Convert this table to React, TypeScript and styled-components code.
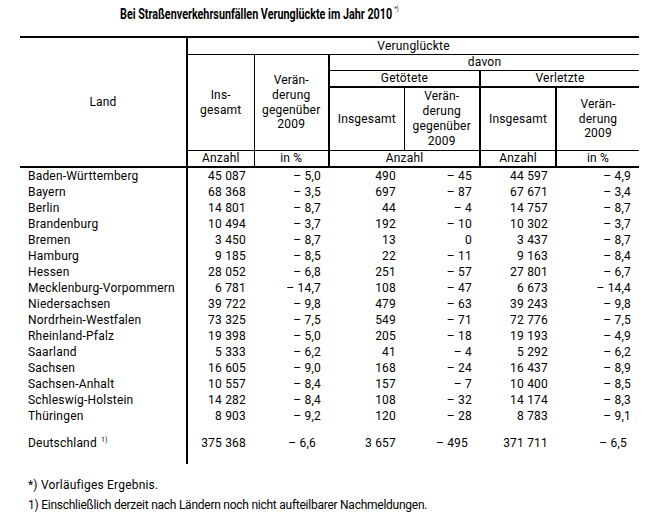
import React from "react";
import styled, { createGlobalStyle } from "styled-components";

const Global = createGlobalStyle`
  body {
    margin: 0;
    background: #fff;
    color: #000;
    font-family: Roboto, "Liberation Sans", sans-serif;
  }
`;

const Page = styled.div`
  width: 656px;
  height: 517px;
  font-size: 12px;
  letter-spacing: 0.2px;
`;

const TitleBar = styled.div`
  height: 36px;
  padding-top: 4px;
  box-sizing: border-box;
`;

const Title = styled.h1`
  display: inline-block;
  margin: 0 0 0 120px;
  font-size: 14px;
  font-weight: 700;
  line-height: 20px;
  letter-spacing: 0;
  white-space: nowrap;
  transform: scaleX(0.77);
  transform-origin: left center;
`;

const Sup = styled.sup`
  font-size: 7px;
  font-weight: 400;
  vertical-align: top;
  line-height: 10px;
  margin-left: 3px;
`;

const Table = styled.table`
  margin-left: 20px;
  width: 619px;
  table-layout: fixed;
  border-collapse: collapse;
  border-top: 2px solid #000;
`;

const Th = styled.th<{ $r?: number; $b?: number; $h?: number }>`
  font-weight: 400;
  text-align: center;
  vertical-align: middle;
  padding: 0 2px;
  line-height: 14.8px;
  height: ${(p) => (p.$h ? `${p.$h}px` : "auto")};
  border-right: ${(p) => (p.$r ? `${p.$r}px solid #000` : "none")};
  border-bottom: ${(p) => (p.$b ? `${p.$b}px solid #000` : "none")};
`;

const Td = styled.td<{ $first?: boolean; $total?: boolean; $shift?: number }>`
  height: 16px;
  line-height: 16px;
  padding: ${(p) => (p.$total ? "11px" : "0")} ${(p) => 8 + (p.$shift || 0)}px
    ${(p) => (p.$total ? "13px" : "0")} ${(p) => (p.$first ? 8 : 4)}px;
  text-align: ${(p) => (p.$first ? "left" : "right")};
  white-space: nowrap;
  border-right: ${(p) => (p.$first ? "2px solid #000" : "none")};
`;

const Small = styled.sup`
  font-size: 7px;
  vertical-align: top;
  line-height: 10px;
  margin-left: 4px;
`;

const Notes = styled.div`
  margin: 11px 0 0 28px;
`;

const Note = styled.div<{ $tight?: boolean }>`
  line-height: 20px;
  white-space: nowrap;
  letter-spacing: ${(p) => (p.$tight ? "-0.25px" : "0.2px")};
`;

type Row = [string, string, string, string, string, string, string];

const rows: Row[] = [
  ["Baden-Württemberg", "45 087", "– 5,0", "490", "– 45", "44 597", "– 4,9"],
  ["Bayern", "68 368", "– 3,5", "697", "– 87", "67 671", "– 3,4"],
  ["Berlin", "14 801", "– 8,7", "44", "– 4", "14 757", "– 8,7"],
  ["Brandenburg", "10 494", "– 3,7", "192", "– 10", "10 302", "– 3,7"],
  ["Bremen", "3 450", "– 8,7", "13", "0", "3 437", "– 8,7"],
  ["Hamburg", "9 185", "– 8,5", "22", "– 11", "9 163", "– 8,4"],
  ["Hessen", "28 052", "– 6,8", "251", "– 57", "27 801", "– 6,7"],
  ["Mecklenburg-Vorpommern", "6 781", "– 14,7", "108", "– 47", "6 673", "– 14,4"],
  ["Niedersachsen", "39 722", "– 9,8", "479", "– 63", "39 243", "– 9,8"],
  ["Nordrhein-Westfalen", "73 325", "– 7,5", "549", "– 71", "72 776", "– 7,5"],
  ["Rheinland-Pfalz", "19 398", "– 5,0", "205", "– 18", "19 193", "– 4,9"],
  ["Saarland", "5 333", "– 6,2", "41", "– 4", "5 292", "– 6,2"],
  ["Sachsen", "16 605", "– 9,0", "168", "– 24", "16 437", "– 8,9"],
  ["Sachsen-Anhalt", "10 557", "– 8,4", "157", "– 7", "10 400", "– 8,5"],
  ["Schleswig-Holstein", "14 282", "– 8,4", "108", "– 32", "14 174", "– 8,3"],
  ["Thüringen", "8 903", "– 9,2", "120", "– 28", "8 783", "– 9,1"],
];

const total: Row = ["Deutschland", "375 368", "– 6,6", "3 657", "– 495", "371 711", "– 6,5"];
const totalShift = [0, 0, 5, 0, 4, 0, 4];

const App = () => (
  <>
    <Global />
    <Page>
      <TitleBar>
        <Title>
          Bei Straßenverkehrsunfällen Verunglückte im Jahr 2010<Sup>*)</Sup>
        </Title>
      </TitleBar>
      <Table>
        <colgroup>
          <col style={{ width: 167 }} />
          <col style={{ width: 67 }} />
          <col style={{ width: 75 }} />
          <col style={{ width: 75 }} />
          <col style={{ width: 76 }} />
          <col style={{ width: 76 }} />
          <col style={{ width: 83 }} />
        </colgroup>
        <thead>
          <tr>
            <Th rowSpan={5} $r={2} $b={2}>
              Land
            </Th>
            <Th colSpan={6} $b={1} $h={16}>
              Verunglückte
            </Th>
          </tr>
          <tr>
            <Th rowSpan={3} $r={1} $b={1}>
              Ins-
              <br />
              gesamt
            </Th>
            <Th rowSpan={3} $r={2} $b={1}>
              Verän-
              <br />
              derung
              <br />
              gegenüber
              <br />
              2009
            </Th>
            <Th colSpan={4} $b={1} $h={15}>
              davon
            </Th>
          </tr>
          <tr>
            <Th colSpan={2} $r={2} $b={2} $h={15}>
              Getötete
            </Th>
            <Th colSpan={2} $b={2} $h={15}>
              Verletzte
            </Th>
          </tr>
          <tr>
            <Th $r={1} $b={1} $h={62}>
              Insgesamt
            </Th>
            <Th $r={2} $b={1}>
              Verän-
              <br />
              derung
              <br />
              gegenüber
              <br />
              2009
            </Th>
            <Th $r={2} $b={1}>
              Insgesamt
            </Th>
            <Th $b={1}>
              Verän-
              <br />
              derung
              <br />
              2009
            </Th>
          </tr>
          <tr>
            <Th $r={1} $b={2} $h={15}>
              Anzahl
            </Th>
            <Th $r={2} $b={2}>
              in %
            </Th>
            <Th colSpan={2} $r={2} $b={2}>
              Anzahl
            </Th>
            <Th $r={2} $b={2}>
              Anzahl
            </Th>
            <Th $b={2}>in %</Th>
          </tr>
        </thead>
        <tbody>
          {rows.map((row) => (
            <tr key={row[0]}>
              {row.map((cell, i) => (
                <Td key={i} $first={i === 0}>
                  {cell}
                </Td>
              ))}
            </tr>
          ))}
          <tr>
            {total.map((cell, i) => (
              <Td key={i} $first={i === 0} $total $shift={totalShift[i]}>
                {cell}
                {i === 0 && <Small>1)</Small>}
              </Td>
            ))}
          </tr>
        </tbody>
      </Table>
      <Notes>
        <Note>*) Vorläufiges Ergebnis.</Note>
        <Note $tight>1) Einschließlich derzeit nach Ländern noch nicht aufteilbarer Nachmeldungen.</Note>
      </Notes>
    </Page>
  </>
);

export default App;
